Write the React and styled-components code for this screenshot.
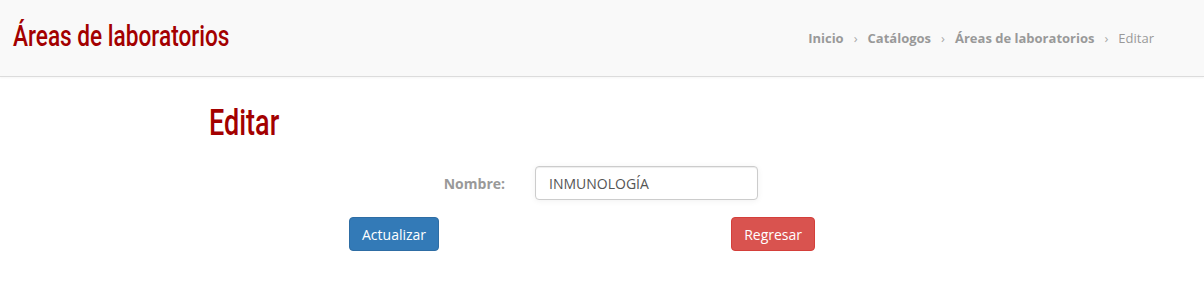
import React from "react";
import styled, { createGlobalStyle } from "styled-components";

const Global = createGlobalStyle`
  html, body { margin: 0; padding: 0; background: #fff; }
  body { font-family: "Open Sans", "Liberation Sans", sans-serif; font-size: 14px; color: #555; }
  * { box-sizing: border-box; }
`;

const Header = styled.header`
  height: 77px;
  background: #f9f9f9;
  border-bottom: 1px solid #dcdcdc;
  box-shadow: 0 1px 2px rgba(0,0,0,0.04);
  display: flex;
  align-items: center;
  justify-content: space-between;
  padding: 0 50px 0 13px;
`;

const Title = styled.h1`
  margin: 0;
  display: inline-block;
  font-family: Roboto, "DejaVu Sans", sans-serif;
  font-weight: 500;
  font-size: 29px;
  color: #a30000;
  white-space: nowrap;
  transform-origin: left center;
  transform: translateY(-2px) scaleX(0.78);
`;

const Crumbs = styled.nav`
  display: flex;
  align-items: center;
  font-size: 13px;
  color: #999;
`;

const Crumb = styled.span`
  font-weight: ${(p) => (p.$active ? 400 : 700)};
  color: #999;
`;

const Sep = styled.span`
  color: #aaa;
  padding: 0 10px;
  font-size: 13px;
`;

const Main = styled.main`
  padding: 25px 0 0 209px;
`;

const Heading = styled.h2`
  margin: 0 0 22px;
  display: inline-block;
  font-family: Roboto, "DejaVu Sans", sans-serif;
  font-weight: 500;
  font-size: 36px;
  line-height: 42px;
  color: #a30000;
  transform-origin: left center;
  transform: scaleX(0.75);
`;

const Field = styled.div`
  display: grid;
  grid-template-columns: 326px 223px;
  align-items: center;
`;

const Label = styled.label`
  text-align: right;
  padding-right: 30px;
  font-weight: 700;
  color: #999;
`;

const Input = styled.input`
  height: 34px;
  width: 223px;
  border: 1px solid #ccc;
  border-radius: 4px;
  padding: 0 13px;
  font-family: "Open Sans", sans-serif;
  font-size: 14px;
  color: #555;
  box-shadow: inset 0 1px 1px rgba(0,0,0,0.075), 0 1px 6px rgba(0,0,0,0.06);
  outline: none;
`;

const Actions = styled.div`
  display: flex;
  justify-content: space-between;
  width: 466px;
  margin: 17px 0 0 140px;
`;

const Button = styled.button`
  height: 34px;
  padding: 0 12px;
  border-radius: 4px;
  border: 1px solid ${(p) => (p.$variant === "danger" ? "#d43f3a" : "#2e6da4")};
  background: ${(p) => (p.$variant === "danger" ? "#d9534f" : "#337ab7")};
  color: #fff;
  font-family: "Open Sans", sans-serif;
  font-size: 14px;
  cursor: pointer;
`;

export default function App() {
  return (
    <>
      <Global />
      <Header>
        <Title>Áreas de laboratorios</Title>
        <Crumbs>
          <Crumb>Inicio</Crumb>
          <Sep>›</Sep>
          <Crumb>Catálogos</Crumb>
          <Sep>›</Sep>
          <Crumb>Áreas de laboratorios</Crumb>
          <Sep>›</Sep>
          <Crumb $active>Editar</Crumb>
        </Crumbs>
      </Header>
      <Main>
        <Heading>Editar</Heading>
        <Field>
          <Label htmlFor="nombre">Nombre:</Label>
          <Input id="nombre" defaultValue="INMUNOLOGÍA" />
        </Field>
        <Actions>
          <Button>Actualizar</Button>
          <Button $variant="danger">Regresar</Button>
        </Actions>
      </Main>
    </>
  );
}
